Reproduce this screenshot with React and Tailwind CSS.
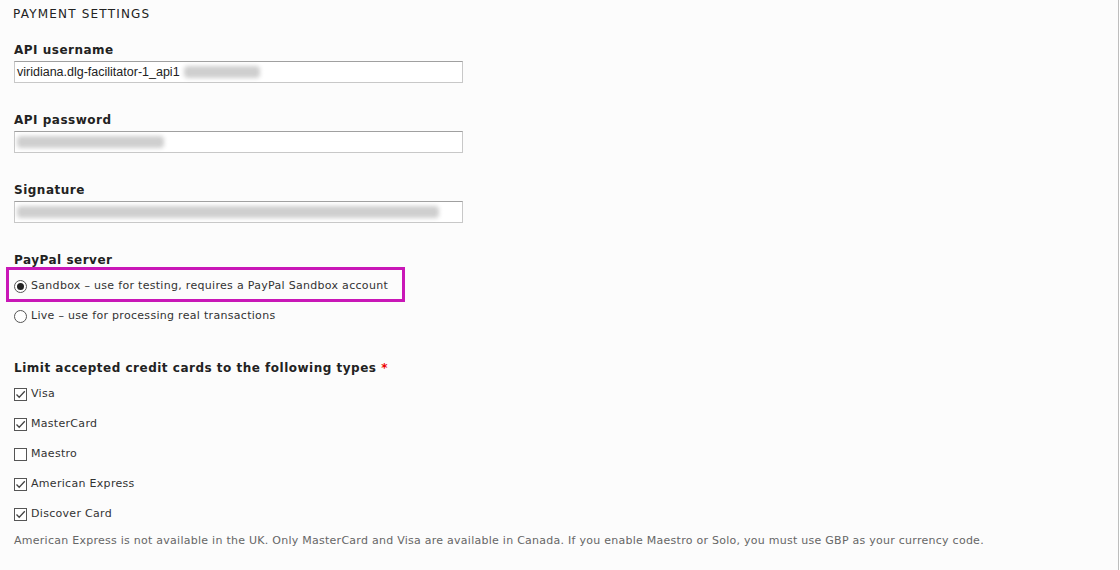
import React from "react";

const Label = ({ children }) => (
	<div className="text-[12px] font-bold tracking-[0.5px] text-[#222] leading-[16px]">
		{children}
	</div>
);

const Field = ({ label, value, blurWidth, blurLeft }) => (
	<div className="flex flex-col gap-[3px]">
		<Label>{label}</Label>
		<div className="relative w-[449px] h-[22px] bg-white border border-[#c8c8c8] border-t-[#a0a0a0] flex items-center px-[2px]">
			{value && (
				<span className="font-['Liberation_Sans',Arial,sans-serif] text-[12.5px] text-[#222] leading-none">
					{value}
				</span>
			)}
			<span
				className="h-[12px] bg-[#cfcfcf] blur-[2px] rounded-sm"
				style={{ width: blurWidth, marginLeft: blurLeft }}
			></span>
		</div>
	</div>
);

const Check = ({ checked, label }) => (
	<div className="flex items-center gap-[4px] h-[16px]">
		<span className="w-[13px] h-[13px] border border-[#555] bg-white flex items-center justify-center">
			{checked && (
				<svg width="11" height="11" viewBox="0 0 11 11">
					<path d="M1.5 5.5 L4.2 8.3 L9.8 2.2" fill="none" stroke="#444" strokeWidth="1.3" />
				</svg>
			)}
		</span>
		<span className="text-[11px] tracking-[0.3px] text-[#333]">{label}</span>
	</div>
);

const Radio = ({ checked, label }) => (
	<div className="flex items-center gap-[4px] h-[16px]">
		<span className="w-[13px] h-[13px] rounded-full border border-[#555] bg-white flex items-center justify-center">
			{checked && <span className="w-[7px] h-[7px] rounded-full bg-[#222]"></span>}
		</span>
		<span className="text-[11px] tracking-[0.3px] text-[#333]">{label}</span>
	</div>
);

export default function App() {
	return (
		<div className="w-[1120px] h-[570px] bg-white overflow-hidden font-['DejaVu_Sans',Verdana,sans-serif]">
			<div className="w-[1119px] h-full bg-[#fcfcfc] border-r border-[#bdbdbd] pl-[14px] pt-[6px]">
				<div className="text-[12px] tracking-[1.2px] text-[#222] leading-[16px] -ml-[1px]">
					PAYMENT SETTINGS
				</div>

				<div className="mt-[20px] flex flex-col gap-[29px]">
					<Field label="API username" value="viridiana.dlg-facilitator-1_api1" blurWidth={76} blurLeft={4} />
					<Field label="API password" blurWidth={147} blurLeft={0} />
					<Field label="Signature" blurWidth={422} blurLeft={0} />
				</div>

				<div className="mt-[29px]">
					<Label>PayPal server</Label>
					<div className="-mt-[1px] -ml-[8px] w-[399px] h-[35px] border-[3px] border-[#c917b7] flex items-center pl-[5px] pt-[3px]">
						<Radio checked label="Sandbox – use for testing, requires a PayPal Sandbox account" />
					</div>
					<div className="mt-[6px]">
						<Radio label="Live – use for processing real transactions" />
					</div>
				</div>

				<div className="mt-[36px]">
					<Label>
						Limit accepted credit cards to the following types{" "}
						<span className="text-[#e00]">*</span>
					</Label>
					<div className="mt-[10px] flex flex-col gap-[14px]">
						<Check checked label="Visa" />
						<Check checked label="MasterCard" />
						<Check label="Maestro" />
						<Check checked label="American Express" />
						<Check checked label="Discover Card" />
					</div>
					<div className="mt-[11px] text-[11px] tracking-[0.26px] text-[#666] leading-[16px]">
						American Express is not available in the UK. Only MasterCard and Visa are available in Canada. If you enable Maestro or Solo, you must use GBP as your currency code.
					</div>
				</div>
			</div>
		</div>
	);
}
